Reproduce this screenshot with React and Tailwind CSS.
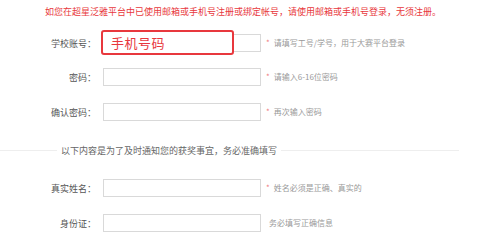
import React from 'react';

const font = { fontFamily: '"Noto Sans CJK SC", "Noto Sans", sans-serif' };

const Row = ({ label, hint, star = true, className = '', children }) => (
    <div className={`relative flex items-center h-[18px] ${className}`}>
        <div className="w-[97px] shrink-0 text-right text-[9px] leading-none text-[#555] pr-[1px]">{label}：</div>
        <div className="ml-[6px] w-[158px] h-[18px] shrink-0 border border-[#d9d9d9] bg-white" />
        {star ? (
            <span className="ml-[5px] text-[8px] text-[#f08080] leading-none">*</span>
        ) : null}
        <span className={`${star ? 'ml-[4px]' : 'ml-[8px]'} text-[8px] leading-none text-[#999]`}>{hint}</span>
        {children}
    </div>
);

export default function App() {
    return (
        <div className="w-[499px] h-[245px] bg-white overflow-hidden relative" style={font}>
            <div className="pt-[7px] pl-[45px] text-[9px] leading-[10px] text-[#e8383d] whitespace-nowrap">
                如您在超星泛雅平台中已使用邮箱或手机号注册或绑定帐号，请使用邮箱或手机号登录，无须注册。
            </div>

            <Row label="学校账号" hint="请填写工号/学号，用于大赛平台登录" className="mt-[17px]">
                <div className="absolute left-[101px] top-[-4px] w-[133px] h-[25px] border-2 border-[#e8383d] rounded-[3px] bg-white flex items-center pl-[8px]">
                    <span className="text-[13px] leading-none text-[#e8383d] tracking-[0.5px]">手机号码</span>
                </div>
            </Row>
            <Row label="密码" hint="请输入6-16位密码" className="mt-[16px]" />
            <Row label="确认密码" hint="再次输入密码" className="mt-[17px]" />

            <div className="mt-[22px] flex items-center h-[14px]">
                <div className="w-[57px] border-t border-[#eee]" />
                <span className="mx-[4px] text-[9px] leading-none text-[#666] whitespace-nowrap">以下内容是为了及时通知您的获奖事宜，务必准确填写</span>
                <div className="w-[178px] border-t border-[#eee]" />
            </div>

            <Row label="真实姓名" hint="姓名必须是正确、真实的" className="mt-[22px]" />
            <Row label="身份证" hint="务必填写正确信息" star={false} className="mt-[17px]" />
        </div>
    );
}
